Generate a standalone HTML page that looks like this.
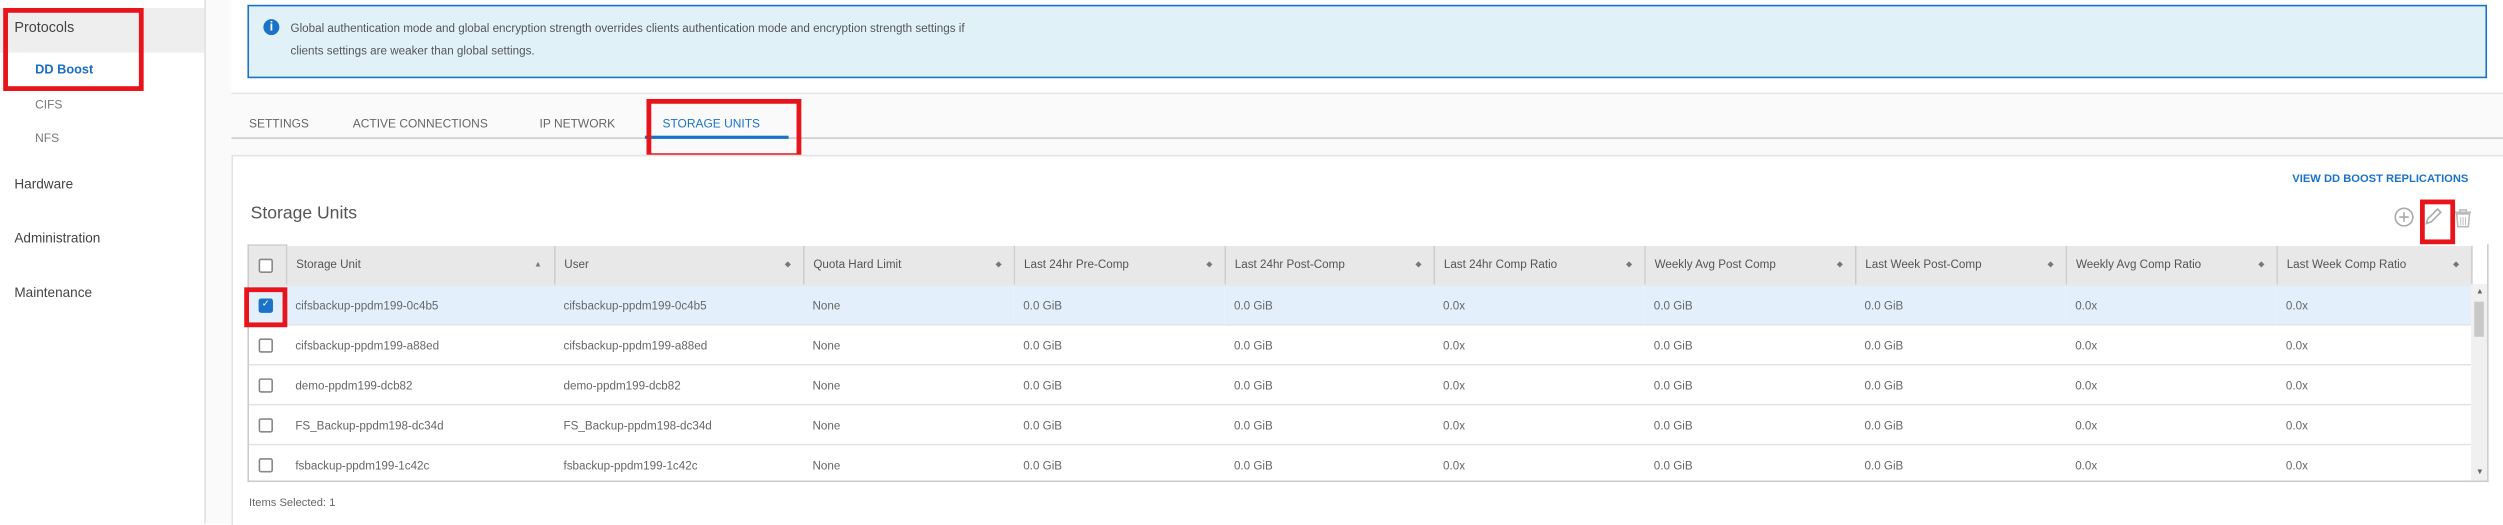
<!DOCTYPE html>
<html><head><meta charset="utf-8"><style>
html,body{margin:0;padding:0;width:2503px;height:524px;overflow:hidden;background:#fff}
#w{position:absolute;left:0;top:0;width:1568px;height:328px;transform:scale(1.5963);transform-origin:0 0;font-family:"Liberation Sans",sans-serif;color:#565656}
.a{position:absolute}
.sb{left:0;top:0;width:128px;height:328px;background:#fff;border-right:1px solid #ddd}
.main{left:129px;top:0;width:1439px;height:328px;background:#fafafa}
.red{position:absolute;border:3px solid #e8141c;box-sizing:border-box}
table{border-collapse:collapse;font-size:7.3px;color:#666;table-layout:fixed}
td,th{height:24px;border-bottom:1px solid #e4e4e4;padding:0 0 0 6px;text-align:left;font-weight:normal;white-space:nowrap;overflow:hidden}
th{background:#e8e8e8;border-right:1px solid #ccc;color:#555;position:relative}
th .s{position:absolute;right:7px;top:9px;font-size:5px;color:#777}
.cb{display:inline-block;width:7px;height:7px;border:1px solid #888;border-radius:1.5px;background:#fff;vertical-align:middle}
tr.sel td{background:#e3f0fb}
</style></head><body><div id="w">
<div class="a sb"></div>
<div class="a" style="left:0;top:5px;width:128px;height:28px;background:#eee"></div>
<div class="a" style="left:9px;top:12px;font-size:9px;color:#444">Protocols</div>
<div class="a" style="left:22px;top:39px;font-size:8px;color:#1a6fc4;font-weight:bold">DD Boost</div>
<div class="a" style="left:22px;top:61px;font-size:7.5px;color:#777">CIFS</div>
<div class="a" style="left:22px;top:82px;font-size:7.5px;color:#777">NFS</div>
<div class="a" style="left:9px;top:110px;font-size:8.5px;color:#444">Hardware</div>
<div class="a" style="left:9px;top:144px;font-size:8.5px;color:#444">Administration</div>
<div class="a" style="left:9px;top:178px;font-size:8.5px;color:#444">Maintenance</div>
<div class="red" style="left:2px;top:5px;width:88px;height:52px"></div>

<div class="a main"></div>
<div class="a" style="left:145px;top:0;width:1423px;height:58px;background:#fff;border-bottom:1px solid #e4e4e4"></div>
<div class="a" style="left:155px;top:3px;width:1401px;height:44px;background:#e1f1f8;border:1px solid #1a73c8"></div>
<div class="a" style="left:165px;top:12px;width:10px;height:10px;border-radius:50%;background:#1a73c8;color:#fff;font-size:8px;font-weight:bold;text-align:center;line-height:10px">i</div>
<div class="a" style="left:182px;top:11px;font-size:7.3px;line-height:13.5px;color:#555">Global authentication mode and global encryption strength overrides clients authentication mode and encryption strength settings if<br>clients settings are weaker than global settings.</div>

<div class="a" style="left:145px;top:86px;width:1423px;height:1px;background:#ccc"></div>
<div class="a" style="left:156px;top:73px;font-size:7.5px;color:#666">SETTINGS</div>
<div class="a" style="left:221px;top:73px;font-size:7.5px;color:#666">ACTIVE CONNECTIONS</div>
<div class="a" style="left:338px;top:73px;font-size:7.5px;color:#666">IP NETWORK</div>
<div class="a" style="left:415px;top:73px;font-size:7.5px;color:#1a73c8">STORAGE UNITS</div>
<div class="a" style="left:404px;top:85px;width:90px;height:2px;background:#1a73c8"></div>
<div class="red" style="left:405px;top:62px;width:97px;height:37px"></div>

<div class="a" style="left:145px;top:97px;width:1423px;height:231px;background:#fff;border-top:1px solid #e4e4e4;border-left:1px solid #e4e4e4"></div>
<div class="a" style="left:1436px;top:109px;font-size:7px;color:#1a73c8;font-weight:bold">VIEW DD BOOST REPLICATIONS</div>
<div class="a" style="left:157px;top:128px;font-size:11px;color:#555">Storage Units</div>
<svg class="a" style="left:1498px;top:128px" width="60" height="16" viewBox="0 0 60 16">
<circle cx="8" cy="8" r="5.5" fill="none" stroke="#aaa" stroke-width="1"/><path d="M8 5v6M5 8h6" stroke="#aaa" stroke-width="1"/>
<path d="M22 12l1-3 6-6 2 2-6 6z" fill="none" stroke="#aaa" stroke-width="1"/>
<path d="M40 5h10M43 5V3.5h4V5M41 6h8l-.7 8h-6.6z" fill="none" stroke="#bbb" stroke-width="1"/><path d="M43.5 8v5M45 8v5M46.5 8v5" stroke="#bbb" stroke-width=".6"/>
</svg>
<div class="red" style="left:1516px;top:125px;width:22px;height:28px"></div>

<div class="a" style="left:155px;top:153px;width:1402px;height:148px;border:1px solid #ccc;border-top:none;overflow:hidden">
<table style="width:1392px">
<colgroup><col style="width:23px"><col style="width:168px"><col style="width:156px"><col style="width:132px"><col style="width:132px"><col style="width:131px"><col style="width:132px"><col style="width:132px"><col style="width:132px"><col style="width:132px"><col style="width:122px"></colgroup>
<tr><th style="border-top:1px solid #ccc"><span class="cb"></span></th><th>Storage Unit<span class="s">▲</span></th><th>User<span class="s">◆</span></th><th>Quota Hard Limit<span class="s">◆</span></th><th>Last 24hr Pre-Comp<span class="s">◆</span></th><th>Last 24hr Post-Comp<span class="s">◆</span></th><th>Last 24hr Comp Ratio<span class="s">◆</span></th><th>Weekly Avg Post Comp<span class="s">◆</span></th><th>Last Week Post-Comp<span class="s">◆</span></th><th>Weekly Avg Comp Ratio<span class="s">◆</span></th><th>Last Week Comp Ratio<span class="s">◆</span></th></tr>
<tr class="sel"><td><span class="cb" style="background:#1a73c8;border-color:#1a73c8;color:#fff;font-size:6px;line-height:7px;text-align:center">✓</span></td><td>cifsbackup-ppdm199-0c4b5</td><td>cifsbackup-ppdm199-0c4b5</td><td>None</td><td>0.0 GiB</td><td>0.0 GiB</td><td>0.0x</td><td>0.0 GiB</td><td>0.0 GiB</td><td>0.0x</td><td>0.0x</td></tr>
<tr><td><span class="cb"></span></td><td>cifsbackup-ppdm199-a88ed</td><td>cifsbackup-ppdm199-a88ed</td><td>None</td><td>0.0 GiB</td><td>0.0 GiB</td><td>0.0x</td><td>0.0 GiB</td><td>0.0 GiB</td><td>0.0x</td><td>0.0x</td></tr>
<tr><td><span class="cb"></span></td><td>demo-ppdm199-dcb82</td><td>demo-ppdm199-dcb82</td><td>None</td><td>0.0 GiB</td><td>0.0 GiB</td><td>0.0x</td><td>0.0 GiB</td><td>0.0 GiB</td><td>0.0x</td><td>0.0x</td></tr>
<tr><td><span class="cb"></span></td><td>FS_Backup-ppdm198-dc34d</td><td>FS_Backup-ppdm198-dc34d</td><td>None</td><td>0.0 GiB</td><td>0.0 GiB</td><td>0.0x</td><td>0.0 GiB</td><td>0.0 GiB</td><td>0.0x</td><td>0.0x</td></tr>
<tr><td><span class="cb"></span></td><td>fsbackup-ppdm199-1c42c</td><td>fsbackup-ppdm199-1c42c</td><td>None</td><td>0.0 GiB</td><td>0.0 GiB</td><td>0.0x</td><td>0.0 GiB</td><td>0.0 GiB</td><td>0.0x</td><td>0.0x</td></tr>
</table>
<div class="a" style="right:0;top:25px;width:10px;height:123px;background:#f0f0f0"></div>
<div class="a" style="right:2px;top:36px;width:6px;height:22px;background:#c8c8c8"></div>
<div class="a" style="right:2px;top:27px;font-size:5px;color:#666">▲</div>
<div class="a" style="right:2px;top:140px;font-size:5px;color:#666">▼</div>
</div>
<div class="red" style="left:153px;top:180px;width:27px;height:25px"></div>
<div class="a" style="left:156px;top:312px;font-size:7px;color:#666">Items Selected: 1</div>
</div></body></html>
